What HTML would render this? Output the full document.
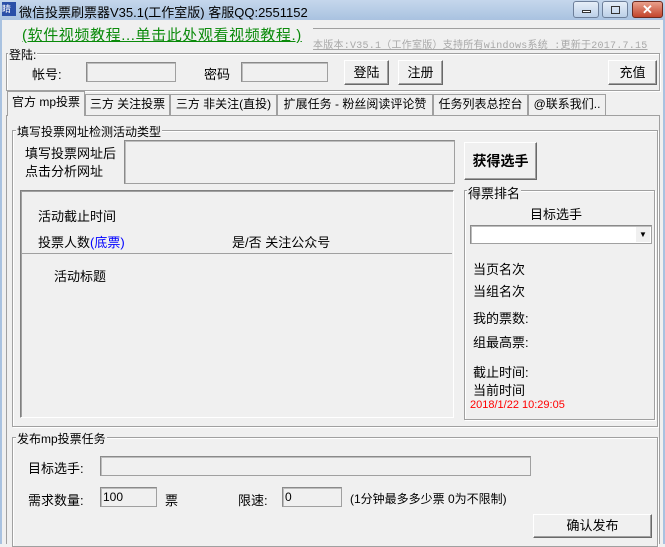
<!DOCTYPE html>
<html><head><meta charset="utf-8"><style>
*{box-sizing:border-box;margin:0;padding:0}
body{width:665px;height:544px;overflow:hidden;background:#f0f0f0;font-family:"Liberation Sans","Noto Sans CJK SC","WenQuanYi Zen Hei",sans-serif;font-size:12px;color:#000;position:relative}
.a{position:absolute;white-space:nowrap}
.tb{left:0;top:0;width:665px;height:20px;background:linear-gradient(#c5d7ec,#a9c2e0)}
.inp{position:absolute;background:#f0f0f0;border:1px solid #a0a0a0;border-top-color:#8a8a8a;border-left-color:#8a8a8a;box-shadow:inset 1px 1px 0 #bdbdbd}
.btn{position:absolute;background:#f0f0f0;border:1px solid;border-color:#fff #696969 #696969 #fff;box-shadow:inset -1px -1px 0 #a0a0a0;text-align:center;font-size:13px}
.grp{position:absolute;border:1px solid #a0a0a0;box-shadow:1px 1px 0 #fff,inset 1px 1px 0 #fff}
.gl{position:absolute;background:#f0f0f0;padding:0 1px;font-size:12px;top:-8px;left:5px}
.tab{position:absolute;top:94px;height:21px;border:1px solid #a0a0a0;border-bottom:none;background:#f0f0f0;text-align:center;line-height:19px;font-size:12px}
.wb{position:absolute;top:1px;height:17px;border:1px solid #6d7f9a;border-radius:3px;background:linear-gradient(#e6eef8,#bcd0e8)}
</style></head><body>
<div class="a tb"></div>
<div class="a" style="left:2px;top:2px;width:14px;height:14px;background:#2a4fa8;color:#fff;font-size:9px;line-height:14px">睛</div>
<div class="a" style="left:19px;top:2px;font-size:13px">微信投票刷票器V35.1(工作室版) 客服QQ:2551152</div>
<div class="wb" style="left:573px;width:26px"><div style="position:absolute;left:8px;top:8px;width:9px;height:3px;border:1px solid #333;background:#fff"></div></div>
<div class="wb" style="left:602px;width:26px"><div style="position:absolute;left:8px;top:4px;width:9px;height:8px;border:1px solid #333"></div></div>
<div class="wb" style="left:632px;width:31px;background:linear-gradient(#e9a08c,#c2452c);border-color:#6b2a20;color:#fff;font-weight:bold;text-align:center;line-height:15px;font-size:13px">✕</div>
<div class="a" style="left:0;top:20px;width:2px;height:524px;background:#a9c2e0"></div>
<div class="a" style="left:663px;top:20px;width:2px;height:524px;background:#a9c2e0"></div>

<div class="a" style="left:22px;top:24px;font-size:15px;letter-spacing:0.6px;color:#0a8a0a;text-decoration:underline">(软件视频教程...单击此处观看视频教程.)</div>
<div class="a" style="left:313px;top:28px;width:347px;height:1px;background:#a0a0a0"></div>
<div class="a" style="left:313px;top:36px;font-size:10px;letter-spacing:0.25px;color:#a8a8a8;text-decoration:underline;font-family:'Liberation Mono','Noto Sans CJK SC',monospace">本版本:V35.1（工作室版）支持所有windows系统 :更新于2017.7.15</div>

<div class="grp" style="left:6px;top:53px;width:654px;height:38px"><span class="gl" style="left:1px">登陆:</span></div>
<div class="a" style="left:32px;top:64px;font-size:13px">帐号:</div>
<div class="inp" style="left:86px;top:62px;width:90px;height:20px"></div>
<div class="a" style="left:204px;top:64px;font-size:13px">密码</div>
<div class="inp" style="left:241px;top:62px;width:87px;height:20px"></div>
<div class="btn" style="left:344px;top:60px;width:45px;height:25px;line-height:23px">登陆</div>
<div class="btn" style="left:398px;top:60px;width:45px;height:25px;line-height:23px">注册</div>
<div class="btn" style="left:608px;top:60px;width:49px;height:25px;line-height:23px">充值</div>

<div class="a" style="left:6px;top:115px;width:654px;height:429px;border:1px solid #a0a0a0;border-bottom:none"></div>
<div class="tab" style="left:85px;width:85px">三方 关注投票</div>
<div class="tab" style="left:170px;width:107px">三方 非关注(直投)</div>
<div class="tab" style="left:277px;width:156px">扩展任务 - 粉丝阅读评论赞</div>
<div class="tab" style="left:433px;width:95px">任务列表总控台</div>
<div class="tab" style="left:528px;width:78px">@联系我们..</div>
<div class="tab" style="left:7px;top:91px;width:78px;height:25px;line-height:21px;background:#f0f0f0;z-index:2">官方 mp投票</div>

<div class="grp" style="left:12px;top:130px;width:646px;height:297px"><span class="gl" style="left:3px">填写投票网址检测活动类型</span></div>
<div class="a" style="left:25px;top:145px;line-height:18px;font-size:13px">填写投票网址后<br>点击分析网址</div>
<div class="inp" style="left:124px;top:140px;width:331px;height:44px"></div>
<div class="btn" style="left:464px;top:142px;width:73px;height:38px;line-height:36px;font-weight:bold;font-size:14px">获得选手</div>

<div class="a" style="left:20px;top:190px;width:434px;height:228px;border:1px solid;border-color:#808080 #fff #fff #808080;box-shadow:inset 1px 1px 0 #a0a0a0"></div>
<div class="a" style="left:22px;top:253px;width:430px;height:1px;background:#a0a0a0"></div>
<div class="a" style="left:38px;top:206px;font-size:13px">活动截止时间</div>
<div class="a" style="left:38px;top:232px;font-size:13px">投票人数<span style="color:#0000ff">(底票)</span></div>
<div class="a" style="left:232px;top:232px;font-size:13px">是/否 关注公众号</div>
<div class="a" style="left:54px;top:266px;font-size:13px">活动标题</div>

<div class="grp" style="left:464px;top:190px;width:191px;height:230px"><span class="gl" style="left:2px;font-size:13px">得票排名</span></div>
<div class="a" style="left:530px;top:204px;font-size:13px">目标选手</div>
<div class="inp" style="left:470px;top:225px;width:182px;height:19px;background:#fff"><div style="position:absolute;right:1px;top:1px;width:14px;height:15px;background:#f0f0f0;font-size:8px;text-align:center;line-height:15px">▼</div></div>
<div class="a" style="left:473px;top:259px;font-size:13px">当页名次</div>
<div class="a" style="left:473px;top:281px;font-size:13px">当组名次</div>
<div class="a" style="left:473px;top:308px;font-size:13px">我的票数:</div>
<div class="a" style="left:473px;top:332px;font-size:13px">组最高票:</div>
<div class="a" style="left:473px;top:362px;font-size:13px">截止时间:</div>
<div class="a" style="left:473px;top:380px;font-size:13px">当前时间</div>
<div class="a" style="left:470px;top:399px;font-size:11px;color:#f00">2018/1/22 10:29:05</div>

<div class="grp" style="left:12px;top:437px;width:646px;height:110px"><span class="gl" style="left:3px">发布mp投票任务</span></div>
<div class="a" style="left:28px;top:458px;font-size:13px">目标选手:</div>
<div class="inp" style="left:100px;top:456px;width:431px;height:20px"></div>
<div class="a" style="left:28px;top:490px;font-size:13px">需求数量:</div>
<div class="inp" style="left:100px;top:487px;width:57px;height:20px;padding-left:2px;line-height:18px">100</div>
<div class="a" style="left:165px;top:490px;font-size:13px">票</div>
<div class="a" style="left:238px;top:490px;font-size:13px">限速:</div>
<div class="inp" style="left:282px;top:487px;width:60px;height:20px;padding-left:2px;line-height:18px">0</div>
<div class="a" style="left:350px;top:490px;font-size:12px">(1分钟最多多少票 0为不限制)</div>
<div class="btn" style="left:533px;top:514px;width:119px;height:24px;line-height:22px">确认发布</div>
</body></html>
